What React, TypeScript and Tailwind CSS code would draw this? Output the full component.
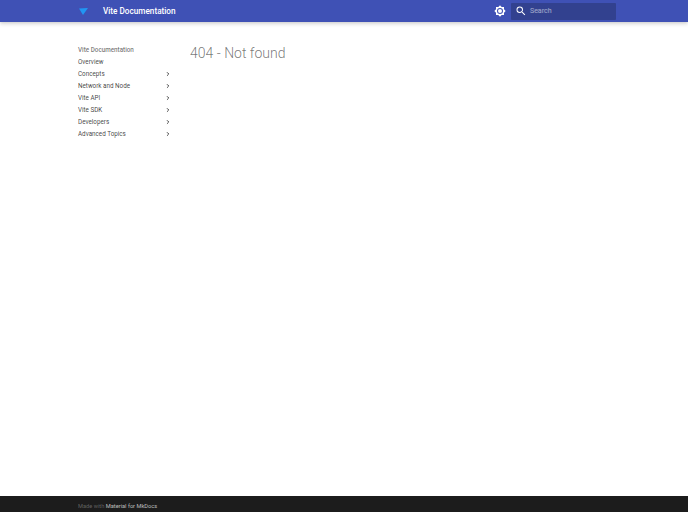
import { ChevronRight } from "lucide-react";

const navItems = [
  { label: "Overview", sub: false },
  { label: "Concepts", sub: true },
  { label: "Network and Node", sub: true },
  { label: "Vite API", sub: true },
  { label: "Vite SDK", sub: true },
  { label: "Developers", sub: true },
  { label: "Advanced Topics", sub: true },
];

export default function App() {
  return (
    <div className="flex flex-col h-[512px] w-[688px] overflow-hidden bg-white font-['Roboto',sans-serif]">
      {/* header */}
      <header className="flex items-center h-[22px] shrink-0 bg-[#3f51b5] pl-[79px] pr-[72px] shadow-[0_0_3px_rgba(0,0,0,0.1),0_2px_4px_rgba(0,0,0,0.15)] z-10">
        <svg width="9" height="7" viewBox="0 0 9 7" className="shrink-0">
          <path d="M0 0.5 L9 0 L4 7 Z" fill="#2196f3" />
        </svg>
        <span className="ml-[15px] text-[8.2px] font-medium text-white">Vite Documentation</span>
        <div className="flex-1" />
        <svg width="12" height="12" viewBox="0 0 24 24" fill="white" className="shrink-0">
          <path d="M12 8a4 4 0 0 0-4 4 4 4 0 0 0 4 4 4 4 0 0 0 4-4 4 4 0 0 0-4-4m0 10a6 6 0 0 1-6-6 6 6 0 0 1 6-6 6 6 0 0 1 6 6 6 6 0 0 1-6 6m8-9.31V4h-4.69L12 .69 8.69 4H4v4.69L.69 12 4 15.31V20h4.69L12 23.31 15.31 20H20v-4.69L23.31 12 20 8.69z" />
        </svg>
        <div className="flex items-center ml-[5px] w-[105px] h-[17px] rounded-[1px] bg-[#32418f]">
          <svg width="12" height="12" viewBox="0 0 24 24" fill="white" className="ml-[4px] shrink-0">
            <path d="M9.5 3A6.5 6.5 0 0 1 16 9.5c0 1.61-.59 3.09-1.56 4.23l.27.27h.79l5 5-1.5 1.5-5-5v-.79l-.27-.27A6.516 6.516 0 0 1 9.5 16 6.5 6.5 0 0 1 3 9.5 6.5 6.5 0 0 1 9.5 3m0 2C7 5 5 7 5 9.5S7 14 9.5 14 14 12 14 9.5 12 5 9.5 5z" />
          </svg>
          <span className="ml-[3px] text-[7px] text-white/55">Search</span>
        </div>
      </header>

      {/* content */}
      <main className="flex flex-1 pl-[78px]">
        <nav className="w-[93px] shrink-0 pt-[22px] text-[6.3px] leading-[12px] text-black/75">
          <div className="text-black/55 font-medium">Vite Documentation</div>
          <ul>
            {navItems.map((item) => (
              <li key={item.label} className="flex items-center justify-between h-[12px]">
                <span>{item.label}</span>
                {item.sub && <ChevronRight size={6} strokeWidth={3.5} className="text-black/80" />}
              </li>
            ))}
          </ul>
        </nav>
        <article className="ml-[19px] pt-[22px]">
          <h1 className="text-[14px] leading-[19px] font-light text-black/55">404 - Not found</h1>
        </article>
      </main>

      {/* footer */}
      <footer className="flex items-center h-[16px] shrink-0 bg-[#1c1c1c] pl-[78px] pt-[4px] text-[5.7px] text-white/30">
        Made with&nbsp;<span className="text-white/70">Material for MkDocs</span>
      </footer>
    </div>
  );
}
